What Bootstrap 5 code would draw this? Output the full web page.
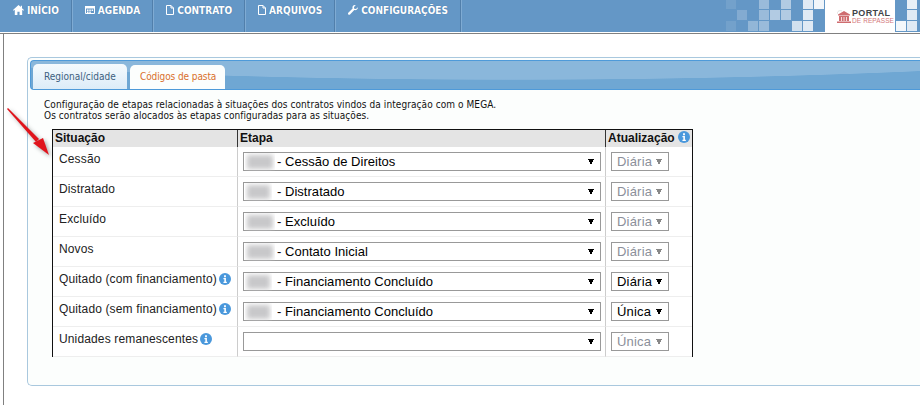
<!DOCTYPE html>
<html lang="pt-BR">
<head>
<meta charset="utf-8">
<title>Portal de Repasse</title>
<link href="https://cdn.jsdelivr.net/npm/bootstrap@5.3.0/dist/css/bootstrap.min.css" rel="stylesheet">
<style>
html,body{height:405px;overflow:hidden;background:#fff}
body{font-family:"Liberation Sans",Arial,sans-serif;color:#000}
.topbar{height:32px;background:#6497c6}
.topnav{flex-wrap:nowrap}
.topnav .nav-link{height:32px;padding:3px 12px 0 13px;display:flex;align-items:flex-start;gap:3px;color:#fff;font:bold 10px/15px "DejaVu Sans Condensed","DejaVu Sans",sans-serif;text-shadow:0 0 1px #3a6a98;border-right:1px solid #517fab;box-shadow:1px 0 0 #7fabd3;white-space:nowrap}
.topnav svg{flex:none;margin-top:2px}
.logobox{width:70px;height:32px;background:#fff;display:flex;align-items:flex-start;gap:1px;padding:10px 0 0 12px}
.logotxt{display:flex;flex-direction:column;font-family:"Liberation Sans",sans-serif;white-space:nowrap}
.logotxt b{font-size:9px;line-height:7px;color:#3f4448;letter-spacing:.35px}
.logotxt span{font-size:6.500px;line-height:7px;color:#d3777b;letter-spacing:.1px}
.rulewrap{height:2px;border-bottom:1px solid #808080;margin-bottom:0}
.pageframe{height:371px;margin-left:3px;border-left:1px solid #808080;padding:23px 0 0 23px}
.panelbox{height:329px;margin-right:-12px;border:1px solid #a9c8de;border-right:0;border-radius:5px 0 0 5px;background:#fcfefd;padding:2px 0 0 2px}
.tabstrip{height:30px;border:1px solid #4e9ad9;border-right:0;border-radius:4px 0 0 4px;padding:3px 0 0 2px;gap:3px;flex-wrap:nowrap;background:radial-gradient(ellipse 1100px 120px at 480px -101px,#8ab7db 99.5%,#6fa7d3 100%)}
.tabstrip .nav-link{height:25px;margin:0;padding:4px 11px 0;border:0;border-radius:5px 5px 0 0;font:10px/18px "DejaVu Sans Condensed","DejaVu Sans",sans-serif;white-space:nowrap}
.tabstrip .tabidle{width:94px;color:#3d5f7e;background:linear-gradient(#f5fafd,#dcecf8)}
.tabstrip .tabon{width:95px;color:#d9702c;background:#fcfefd;margin-top:1px;height:24px;padding:3px 10px 0;letter-spacing:-.1px}
.intro{margin:9px 0 0 14px;font:10px/11px "DejaVu Sans Condensed","DejaVu Sans",sans-serif;letter-spacing:.075px;color:#111}
.sittable{width:641px;margin:8px 0 0 22px;table-layout:fixed;border-collapse:separate;border-spacing:0;font-size:12px;letter-spacing:.14px;border-top:1px solid #111;border-left:1px solid #111;border-right:1px solid #111;color:#222}
.sittable th{height:17px;padding:0 0 0 2px;background:#e4e4e4;font-size:12px;line-height:15px;letter-spacing:0;border-right:1px solid #333;white-space:nowrap;color:#111}
.sittable th:last-child{border-right:0}
.sittable th svg{margin-left:3px}
.sittable td{height:30px;padding:4px 0 0 6px;vertical-align:top;line-height:16px;border-right:1px solid #ccc;border-bottom:1px solid #eee;white-space:nowrap;background:#fff}
.sittable td:last-child{border-right:0}
.sittable td svg{vertical-align:-2px;margin-left:2px}
.fieldcell{position:relative}
.sittable td.fieldcell{padding:5px 0 0 5px}
.pick{appearance:none;-webkit-appearance:none;display:block;height:19px;border:1px solid #999;border-radius:0;font:13px/17px "Liberation Sans",sans-serif;letter-spacing:.03px;color:#000;padding:0 0 0 33px;background:#fff conic-gradient(from 333.500deg at 50% 100%,#000 53deg,transparent 0) no-repeat right 6px center/6px 6px;opacity:1}
.pickwide{width:358px}
.picksmall{width:58px;padding-left:5px;letter-spacing:.2px}
.pick:disabled{color:#8b8f9a;background-image:conic-gradient(from 333.500deg at 50% 100%,#888 53deg,transparent 0)}
.smudge{position:absolute;left:9px;top:8px;height:14px;background:#c8c8ca;filter:blur(2.500px);clip-path:inset(-2px);pointer-events:none}
.arrowmark{position:absolute;left:6px;top:106px;filter:drop-shadow(2px 2px 2px rgba(0,0,0,.35))}
</style>
</head>
<body class="position-relative">
<header class="topbar d-flex justify-content-between">
  <nav class="nav topnav">
    <a class="nav-link" href="#"><svg width="11" height="10" viewBox="0 0 11 10"><path fill="#fff" d="M5.500 0 0 5l.7.7L1.800 4.800V10h2.600V6.800h2.200V10h2.600V4.800l1.100.9L11 5 9 3.200V.8H7.800v1.300z"/></svg>INÍCIO</a>
    <a class="nav-link" href="#"><svg width="10" height="9" viewBox="0 0 10 9"><path fill="none" stroke="#fff" d="M.5 1.500h9v7h-9z"/><path fill="#fff" d="M0 1h10v2.500H0zM2 4.500h1.500V6H2zM4.300 4.500h1.500V6H4.300zM6.600 4.500h1.500V6H6.600zM2 6.500h1.500V8H2zM4.300 6.500h1.500V8H4.300z"/></svg>AGENDA</a>
    <a class="nav-link" href="#"><svg width="8" height="10" viewBox="0 0 8 10"><path fill="none" stroke="#fff" d="M.5.500h4.500l2.500 2.500v6.500h-7zM5 .500V3h2.500"/></svg>CONTRATO</a>
    <a class="nav-link" href="#"><svg width="8" height="10" viewBox="0 0 8 10"><path fill="none" stroke="#fff" d="M.5.500h4.500l2.500 2.500v6.500h-7zM5 .500V3h2.500"/></svg>ARQUIVOS</a>
    <a class="nav-link" href="#"><svg width="10" height="10" viewBox="0 0 10 10"><path fill="#fff" d="M9.800 2.300 8 4 6.200 3.700 6 2 7.700.200C6.300-.300 4.700.500 4.500 2c-.1.500 0 1 .1 1.400L.3 7.700c-.5.500-.4 1.200 0 1.700.5.500 1.200.5 1.700 0l4.300-4.300c1.700.600 3.900-1 3.500-2.800z"/></svg>CONFIGURAÇÕES</a>
  </nav>
  <div class="d-flex">
    <svg width="99" height="32" viewBox="726 0 99 32"><g fill="#fff">
      <rect x="726" y="0" width="10" height="9" opacity=".1"/><rect x="759" y="0" width="10" height="9" opacity=".35"/><rect x="781" y="0" width="10" height="9" opacity=".5"/><rect x="803" y="0" width="10" height="9" opacity=".8"/><rect x="814" y="0" width="10" height="9" opacity=".9"/>
      <rect x="737" y="10" width="10" height="10" opacity=".2"/><rect x="759" y="10" width="10" height="10" opacity=".35"/><rect x="770" y="10" width="10" height="10" opacity=".5"/><rect x="781" y="10" width="10" height="10" opacity=".5"/><rect x="803" y="10" width="10" height="10" opacity=".8"/>
      <rect x="726" y="21" width="10" height="10" opacity=".1"/><rect x="748" y="21" width="10" height="10" opacity=".3"/><rect x="759" y="21" width="10" height="10" opacity=".35"/><rect x="792" y="21" width="10" height="10" opacity=".7"/><rect x="803" y="21" width="10" height="10" opacity=".8"/>
    </g></svg>
    <div class="logobox">
      <svg width="14" height="14" viewBox="0 0 14 14"><path fill="none" stroke="#ddd" d="M0 4C0 1 3 0 5 1"/><path fill="#cf6d70" d="M7 1 13 4.500v1H1v-1zM2 6h10v5H2zM0 11.500h14V13H0z"/><path fill="#f4dcdc" d="M4 7h1v4H4zM6.500 7h1v4h-1zM9 7h1v4H9z"/></svg>
      <div class="logotxt"><b>PORTAL</b><span>DE REPASSE</span></div>
    </div>
    <svg width="25" height="32" viewBox="895 0 25 32"><g fill="#fff">
      <rect x="907" y="0" width="10" height="9" opacity=".85"/><rect x="907" y="10" width="10" height="10" opacity=".8"/><rect x="896" y="21" width="10" height="10" opacity=".92"/><rect x="907" y="21" width="10" height="10" opacity=".8"/>
    </g></svg>
  </div>
</header>
<div class="rulewrap"></div>
<main class="pageframe">
  <section class="panelbox">
    <div class="nav tabstrip">
      <a class="nav-link tabidle" href="#">Regional/cidade</a>
      <a class="nav-link tabon" href="#">Códigos de pasta</a>
    </div>
    <p class="intro mb-0">Configuração de etapas relacionadas à situações dos contratos vindos da integração com o MEGA.<br>Os contratos serão alocados às etapas configuradas para as situações.</p>
    <table class="sittable">
      <colgroup><col style="width:185px"><col style="width:368px"><col></colgroup>
      <thead><tr><th>Situação</th><th>Etapa</th><th>Atualização<svg width="12" height="12" viewBox="0 0 13 13" class="align-text-top"><circle cx="6.500" cy="6.500" r="6.500" fill="#4a98dc"/><path fill="#fff" d="M5.500 2.500h2v2h-2zM4.800 5.500h2.700v4h1v1.200H4.800V9.500h1V6.700h-1z"/></svg></th></tr></thead>
      <tbody>
        <tr><td>Cessão</td><td class="fieldcell"><select class="pick pickwide"><option>- Cessão de Direitos</option></select><span class="smudge" style="width:26px"></span></td><td class="fieldcell"><select class="pick picksmall" disabled><option>Diária</option></select></td></tr>
        <tr><td>Distratado</td><td class="fieldcell"><select class="pick pickwide"><option>- Distratado</option></select><span class="smudge" style="width:23px"></span></td><td class="fieldcell"><select class="pick picksmall" disabled><option>Diária</option></select></td></tr>
        <tr><td>Excluído</td><td class="fieldcell"><select class="pick pickwide"><option>- Excluído</option></select><span class="smudge" style="width:26px"></span></td><td class="fieldcell"><select class="pick picksmall" disabled><option>Diária</option></select></td></tr>
        <tr><td>Novos</td><td class="fieldcell"><select class="pick pickwide"><option>- Contato Inicial</option></select><span class="smudge" style="width:26px"></span></td><td class="fieldcell"><select class="pick picksmall" disabled><option>Diária</option></select></td></tr>
        <tr><td>Quitado (com financiamento)<svg width="12" height="12" viewBox="0 0 13 13"><circle cx="6.500" cy="6.500" r="6.500" fill="#4a98dc"/><path fill="#fff" d="M5.500 2.500h2v2h-2zM4.800 5.500h2.700v4h1v1.200H4.800V9.500h1V6.700h-1z"/></svg></td><td class="fieldcell"><select class="pick pickwide"><option>- Financiamento Concluído</option></select><span class="smudge" style="width:23px"></span></td><td class="fieldcell"><select class="pick picksmall"><option>Diária</option></select></td></tr>
        <tr><td>Quitado (sem financiamento)<svg width="12" height="12" viewBox="0 0 13 13"><circle cx="6.500" cy="6.500" r="6.500" fill="#4a98dc"/><path fill="#fff" d="M5.500 2.500h2v2h-2zM4.800 5.500h2.700v4h1v1.200H4.800V9.500h1V6.700h-1z"/></svg></td><td class="fieldcell"><select class="pick pickwide"><option>- Financiamento Concluído</option></select><span class="smudge" style="width:23px"></span></td><td class="fieldcell"><select class="pick picksmall"><option>Única</option></select></td></tr>
        <tr><td>Unidades remanescentes<svg width="12" height="12" viewBox="0 0 13 13"><circle cx="6.500" cy="6.500" r="6.500" fill="#4a98dc"/><path fill="#fff" d="M5.500 2.500h2v2h-2zM4.800 5.500h2.700v4h1v1.200H4.800V9.500h1V6.700h-1z"/></svg></td><td class="fieldcell"><select class="pick pickwide"><option></option></select></td><td class="fieldcell"><select class="pick picksmall" disabled><option>Única</option></select></td></tr>
      </tbody>
    </table>
  </section>
</main>
<svg class="arrowmark" width="48" height="52" viewBox="0 0 48 52"><path fill="#e0141c" d="M1 3 2 2 33 33 30 36z"/><path fill="#e0141c" d="M43 49 27 37 37 32z"/></svg>
</body>
</html>
